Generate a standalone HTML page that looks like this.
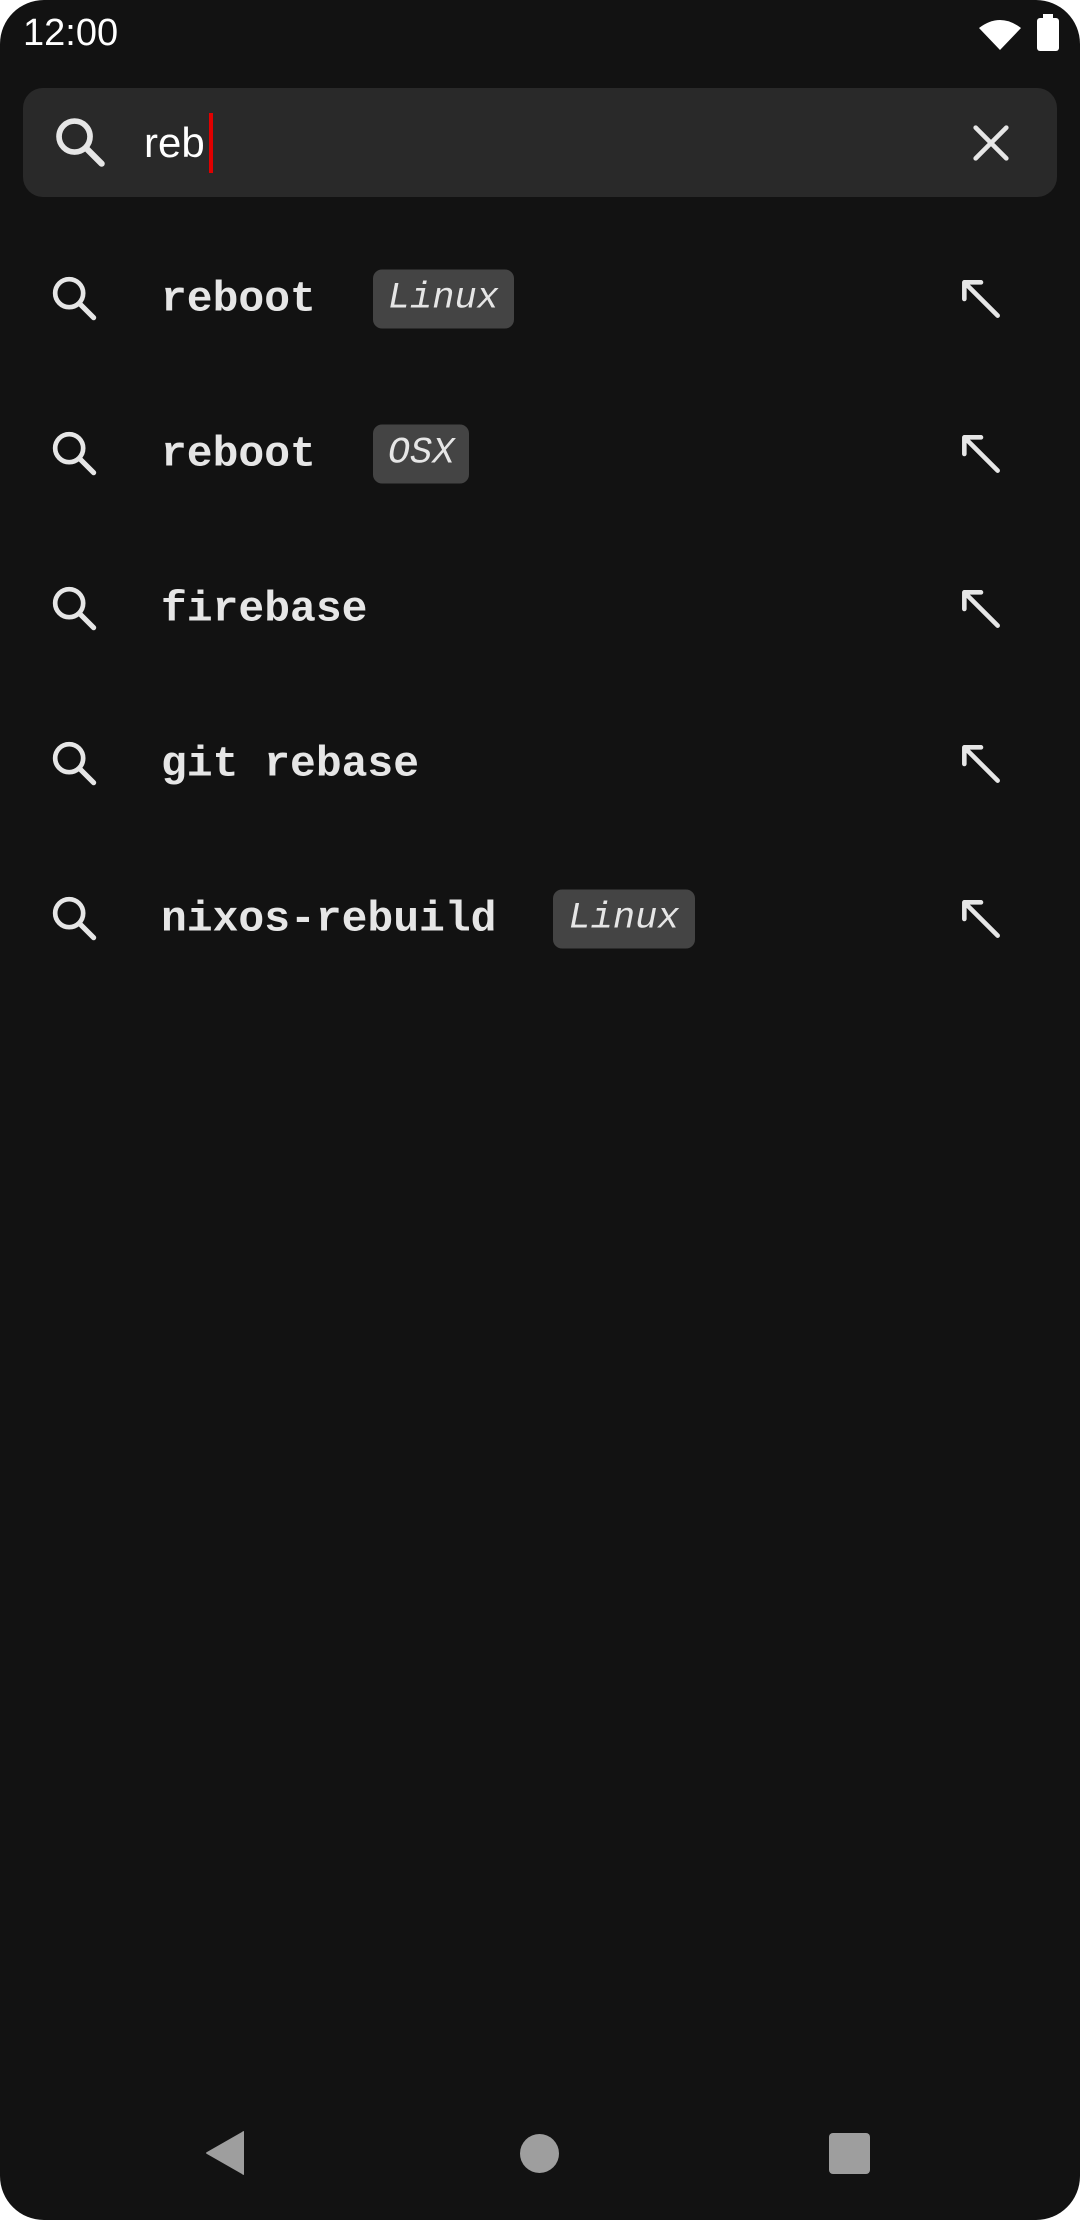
<!DOCTYPE html>
<html><head><meta charset="utf-8"><style>
html,body{margin:0;padding:0;background:#fff;}
.screen{position:relative;width:1080px;height:2220px;background:#121212;border-radius:44px;overflow:hidden;font-family:"Liberation Sans",sans-serif;}
.abs{position:absolute;}
.time{left:23px;top:11px;font-size:38px;color:#fff;line-height:44px;}
.sbox{left:23px;top:88px;width:1034px;height:109px;background:#292929;border-radius:20px;}
.q{left:144px;top:116px;font-size:42px;color:#fff;line-height:54px;}
.cur{left:209px;top:113px;width:4px;height:60px;background:#e00000;}
.row{position:absolute;left:0;width:1080px;height:100px;}
.row .t{position:absolute;left:161px;top:50%;transform:translateY(-50%);font-family:"Liberation Mono",monospace;font-weight:bold;font-size:43px;color:#e6e6e6;white-space:nowrap;display:flex;align-items:center;}
.tag{display:inline-block;margin-left:57px;background:#444;border-radius:9px;height:59px;line-height:59px;padding:0 15px;font-weight:normal;font-style:italic;font-size:37px;color:#e6e6e6;}
.ic{position:absolute;top:50%;transform:translateY(-50%);}
</style></head><body>
<div class="screen">
<div class="abs time">12:00</div>
<svg class="abs" style="left:976px;top:16px" width="48" height="36" viewBox="0 0 48 36"><path d="M3 12 Q24 -4 45 12 L24 34 Z" fill="#fff"/></svg>
<svg class="abs" style="left:1036px;top:14px" width="24" height="38" viewBox="0 0 24 38"><rect x="7" y="0" width="10" height="5" fill="#fff"/><rect x="1" y="4" width="22" height="33" rx="3" fill="#fff"/></svg>

<div class="abs sbox"></div>
<svg class="abs" style="left:50px;top:112px" width="62" height="62" viewBox="0 0 24 24"><circle cx="9.5" cy="9.5" r="6" fill="none" stroke="#e6e6e6" stroke-width="2.2"/><path d="M14 14 L20 20" stroke="#e6e6e6" stroke-width="2.4" stroke-linecap="round"/></svg>
<div class="abs q">reb</div>
<div class="abs cur"></div>
<svg class="abs" style="left:968px;top:120px" width="46" height="46" viewBox="0 0 24 24"><path d="M4 4 L20 20 M20 4 L4 20" stroke="#e6e6e6" stroke-width="2.4" stroke-linecap="round"/></svg>

<div class="row" style="top:249px">
<svg class="ic" style="left:47px" width="56" height="56" viewBox="0 0 24 24"><circle cx="9.5" cy="9.5" r="6" fill="none" stroke="#e6e6e6" stroke-width="2"/><path d="M14 14 L20 20" stroke="#e6e6e6" stroke-width="2.2" stroke-linecap="round"/></svg>
<div class="t">reboot<span class="tag">Linux</span></div>
<svg class="ic" style="left:956px" width="50" height="50" viewBox="0 0 24 24"><path d="M4 4 L20 20 M4 4 L4 12 M4 4 L12 4" stroke="#e6e6e6" stroke-width="2.2" stroke-linecap="round"/></svg>
</div>
<div class="row" style="top:404px">
<svg class="ic" style="left:47px" width="56" height="56" viewBox="0 0 24 24"><circle cx="9.5" cy="9.5" r="6" fill="none" stroke="#e6e6e6" stroke-width="2"/><path d="M14 14 L20 20" stroke="#e6e6e6" stroke-width="2.2" stroke-linecap="round"/></svg>
<div class="t">reboot<span class="tag">OSX</span></div>
<svg class="ic" style="left:956px" width="50" height="50" viewBox="0 0 24 24"><path d="M4 4 L20 20 M4 4 L4 12 M4 4 L12 4" stroke="#e6e6e6" stroke-width="2.2" stroke-linecap="round"/></svg>
</div>
<div class="row" style="top:559px">
<svg class="ic" style="left:47px" width="56" height="56" viewBox="0 0 24 24"><circle cx="9.5" cy="9.5" r="6" fill="none" stroke="#e6e6e6" stroke-width="2"/><path d="M14 14 L20 20" stroke="#e6e6e6" stroke-width="2.2" stroke-linecap="round"/></svg>
<div class="t">firebase</div>
<svg class="ic" style="left:956px" width="50" height="50" viewBox="0 0 24 24"><path d="M4 4 L20 20 M4 4 L4 12 M4 4 L12 4" stroke="#e6e6e6" stroke-width="2.2" stroke-linecap="round"/></svg>
</div>
<div class="row" style="top:714px">
<svg class="ic" style="left:47px" width="56" height="56" viewBox="0 0 24 24"><circle cx="9.5" cy="9.5" r="6" fill="none" stroke="#e6e6e6" stroke-width="2"/><path d="M14 14 L20 20" stroke="#e6e6e6" stroke-width="2.2" stroke-linecap="round"/></svg>
<div class="t">git rebase</div>
<svg class="ic" style="left:956px" width="50" height="50" viewBox="0 0 24 24"><path d="M4 4 L20 20 M4 4 L4 12 M4 4 L12 4" stroke="#e6e6e6" stroke-width="2.2" stroke-linecap="round"/></svg>
</div>
<div class="row" style="top:869px">
<svg class="ic" style="left:47px" width="56" height="56" viewBox="0 0 24 24"><circle cx="9.5" cy="9.5" r="6" fill="none" stroke="#e6e6e6" stroke-width="2"/><path d="M14 14 L20 20" stroke="#e6e6e6" stroke-width="2.2" stroke-linecap="round"/></svg>
<div class="t">nixos-rebuild<span class="tag">Linux</span></div>
<svg class="ic" style="left:956px" width="50" height="50" viewBox="0 0 24 24"><path d="M4 4 L20 20 M4 4 L4 12 M4 4 L12 4" stroke="#e6e6e6" stroke-width="2.2" stroke-linecap="round"/></svg>
</div>

<svg class="abs" style="left:204px;top:2130px" width="44" height="46" viewBox="0 0 44 46"><path d="M40 2 L40 44 Q40 46 38 44 L3 24 Q1 23 3 22 L38 2 Q40 0 40 2Z" fill="#9e9e9e"/></svg>
<div class="abs" style="left:520px;top:2134px;width:39px;height:39px;border-radius:50%;background:#9e9e9e"></div>
<div class="abs" style="left:829px;top:2133px;width:41px;height:41px;border-radius:4px;background:#9e9e9e"></div>
</div>
</body></html>
